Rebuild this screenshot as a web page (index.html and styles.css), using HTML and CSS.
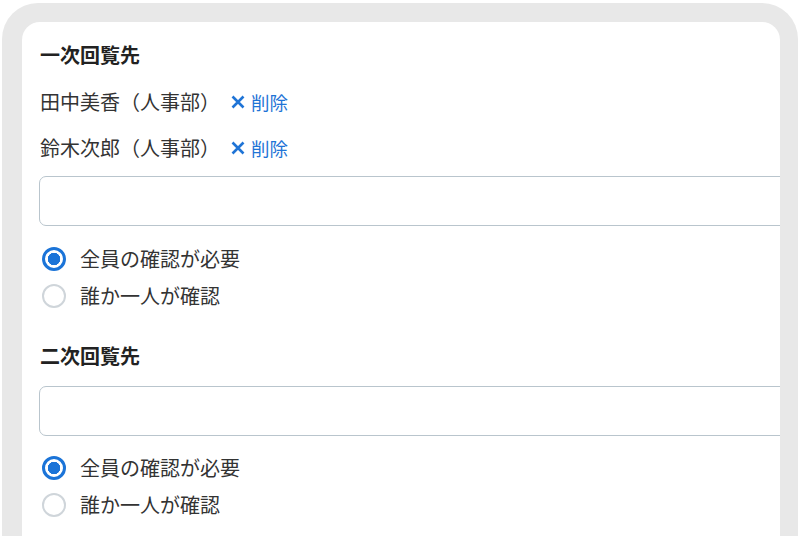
FILE: index.html
```html
<!DOCTYPE html>
<html lang="ja">
<head>
    <meta charset="UTF-8">
    <meta name="viewport" content="width=device-width, initial-scale=1.0">
    <title>回覧先</title>

    <link rel="stylesheet" href="styles.css">
</head>
<body>
    <div class="frame">
        <div class="card">
            <section class="group">
                <h2 class="group-title">一次回覧先</h2>
                <ul class="members">
                    <li class="member">
                        <span>田中美香（人事部）</span>
                        <a href="#" class="remove">
                            <svg width="14" height="14" viewBox="0 0 14 14"><path d="M1.5 1.5L12.5 12.5M12.5 1.5L1.5 12.5" stroke="currentColor" stroke-width="2.6"/></svg>
                            削除
                        </a>
                    </li>
                    <li class="member">
                        <span>鈴木次郎（人事部）</span>
                        <a href="#" class="remove">
                            <svg width="14" height="14" viewBox="0 0 14 14"><path d="M1.5 1.5L12.5 12.5M12.5 1.5L1.5 12.5" stroke="currentColor" stroke-width="2.6"/></svg>
                            削除
                        </a>
                    </li>
                </ul>
                <input type="text" class="search">
                <div class="options">
                    <label class="option"><input type="radio" name="first" checked><span>全員の確認が必要</span></label>
                    <label class="option"><input type="radio" name="first"><span>誰か一人が確認</span></label>
                </div>
            </section>

            <section class="group group-second">
                <h2 class="group-title">二次回覧先</h2>
                <input type="text" class="search">
                <div class="options options-second">
                    <label class="option"><input type="radio" name="second" checked><span>全員の確認が必要</span></label>
                    <label class="option"><input type="radio" name="second"><span>誰か一人が確認</span></label>
                </div>
            </section>
        </div>
    </div>
</body>
</html>
```

FILE: styles.css
```css
html, body {
    margin: 0;
    height: 536px;
    overflow: hidden;
    background-color: #fff;
    font-family: "Noto Sans CJK JP", "Noto Sans", sans-serif;
    color: #333;
}

.frame {
    margin: 3px 2px 0 2px;
    height: 600px;
    padding: 19px 18px 0 20px;
    background-color: #e8e8e8;
    border-radius: 36px 36px 0 0;
}

.card {
    height: 100%;
    padding: 21px 0 0 18px;
    background-color: #fff;
    border-radius: 18px 18px 0 0;
    overflow: hidden;
}

.group-title {
    margin: 0;
    font-size: 20px;
    line-height: 24px;
    font-weight: bold;
    color: #222;
}

.members {
    list-style: none;
    margin: 23px 0 0 0;
    padding: 0;
    display: flex;
    flex-direction: column;
    gap: 22px;
}

.member {
    display: flex;
    align-items: center;
    gap: 11px;
    font-size: 20px;
    line-height: 24px;
}

.remove {
    display: flex;
    align-items: center;
    gap: 6px;
    color: #1f74d6;
    text-decoration: none;
    font-size: 18.5px;
}

.search {
    display: block;
    box-sizing: border-box;
    width: 780px;
    height: 50px;
    margin: 16px 0 0 -1px;
    border: 1px solid #b9c5cd;
    border-radius: 7px;
    background-color: #fff;
}

.options {
    margin-top: 21px;
    display: flex;
    flex-direction: column;
    gap: 13px;
}

.options-second {
    margin-top: 20px;
}

.option {
    display: flex;
    align-items: center;
    gap: 14px;
    font-size: 20px;
    line-height: 24px;
}

.option input {
    appearance: none;
    margin: 0 0 0 2px;
    width: 24px;
    height: 24px;
    box-sizing: border-box;
    border: 2px solid #cfd5da;
    border-radius: 50%;
    background-color: #fff;
}

.option input:checked {
    border: 3px solid #1b74d8;
    background: radial-gradient(circle, #1b74d8 0, #1b74d8 6px, #fff 6.5px);
}

.group-second {
    margin-top: 36px;
}

.group-second .search {
    margin-top: 18px;
}
```
